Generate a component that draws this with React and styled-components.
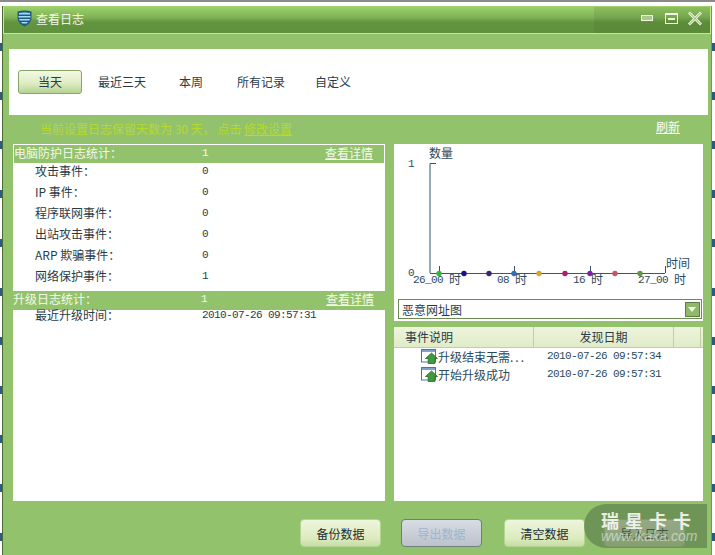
import React from 'react';
import styled, { createGlobalStyle } from 'styled-components';

const CJK = '"Noto Sans CJK SC", "Liberation Sans", sans-serif';
const MONO = '"Liberation Mono", "Noto Sans CJK SC", monospace';

const tabs = [
  ['当天', 16],
  ['最近三天', 33],
  ['本周', 34],
  ['所有记录', 30],
  ['自定义', 0]
];
const protectRows = [
  ['攻击事件：', '0'],
  ['IP 事件：', '0'],
  ['程序联网事件：', '0'],
  ['出站攻击事件：', '0'],
  ['ARP 欺骗事件：', '0'],
  ['网络保护事件：', '1']
];
const events = [
  ['升级结束无需', '...', '2010-07-26 09:57:34'],
  ['开始升级成功', '', '2010-07-26 09:57:31']
];
const dots = [
  [439, '#2fb83a'], [464, '#1c0f8c'], [489, '#3c2272'], [514, '#2f70b8'], [539, '#d8a52c'],
  [565, '#b01c70'], [590, '#8420a8'], [615, '#c05a62'], [640, '#5f9a3c']
];

function ShieldIcon() {
  return (
    <svg width="15" height="17" viewBox="0 0 15 17">
      <path d="M0.500 1.500 Q7.500 -0.500 14.500 1.500 V8 Q14.500 13 7.500 16.500 Q0.500 13 0.500 8 Z" fill="#1f5a86" />
      <path d="M2 3 Q7.500 1.800 13 3 V4.500 H2 Z M1.500 6 H13.500 V7.500 H1.500 Z M2 9 H13 L12.400 10.500 H2.600 Z M4 12 H11 L9.500 13.500 H5.500 Z" fill="#a6dcf0" />
    </svg>
  );
}

function UpgradeIcon() {
  return (
    <svg width="17" height="15" viewBox="0 0 17 15">
      <rect x="0.5" y="0.5" width="14" height="12.5" fill="#fff" stroke="#4a74a8" />
      <rect x="1" y="1" width="13" height="2" fill="#7fa4cc" />
      <path d="M10.5 4 L16.5 9.5 H13.8 V14.5 H7.2 V9.5 H4.5 Z" fill="#3f9a3a" stroke="#1f6a22" strokeWidth="0.8" />
    </svg>
  );
}

function Chart() {
  return (
    <ChartSvg width="309" height="152" viewBox="394 144 309 152">
      <path d="M436 163.500 H430 V273" fill="none" stroke="#2c5570" />
      <path d="M439.500 266 V273 M514.500 266 V273 M590.500 266 V273 M665.500 266 V273" stroke="#2c5570" />
      <path d="M430 273.500 H665" stroke="#a52a3a" />
      {dots.map(([x, c]) => (
        <circle key={x} cx={x} cy="273.500" r="2.700" fill={c} />
      ))}
      <ChartText x="429" y="158">数量</ChartText>
      <ChartText x="408" y="167" $mono>1</ChartText>
      <ChartText x="408" y="276" $mono>0</ChartText>
      <ChartText x="666" y="268">时间</ChartText>
      <ChartText x="413" y="283" $mono>26_00</ChartText>
      <ChartText x="449" y="284">时</ChartText>
      <ChartText x="497" y="283" $mono>08</ChartText>
      <ChartText x="515" y="284">时</ChartText>
      <ChartText x="573" y="283" $mono>16</ChartText>
      <ChartText x="591" y="284">时</ChartText>
      <ChartText x="638" y="283" $mono>27_00</ChartText>
      <ChartText x="674" y="284">时</ChartText>
    </ChartSvg>
  );
}

export default function App() {
  return (
    <>
      <GlobalStyle />
      <Desktop>
        <Window>
          <TitleBar>
            <ShieldIcon />
            <Title>查看日志</Title>
            <WindowButtons>
              <MinButton />
              <MaxButton />
              <CloseButton>
                <svg width="16" height="15" viewBox="0 0 16 15">
                  <path d="M2 1.500 L14 13.500 M14 1.500 L2 13.500" stroke="#e8f2d8" strokeWidth="3" fill="none" />
                  <path d="M2.500 2 L13.500 13 M13.500 2 L2.500 13" stroke="#86ad66" strokeWidth="0.900" fill="none" />
                </svg>
              </CloseButton>
            </WindowButtons>
          </TitleBar>
          <Body>
            <TabPanel>
              {tabs.map(([t, gap], i) => (
                <Tab key={t} $active={i === 0} $gap={gap}>{t}</Tab>
              ))}
            </TabPanel>
            <NoticeRow>
              <Notice>当前设置日志保留天数为 30 天， 点击 <NoticeLink>修改设置</NoticeLink></Notice>
              <Refresh>刷新</Refresh>
            </NoticeRow>
            <Columns>
              <StatsPanel>
                <SectionHead>
                  <HeadLabel>电脑防护日志统计：</HeadLabel>
                  <HeadValue>1</HeadValue>
                  <DetailLink>查看详情</DetailLink>
                </SectionHead>
                <StatList>
                  {protectRows.map(([label, value]) => (
                    <StatRow key={label}>
                      <StatLabel>{label}</StatLabel>
                      <StatValue>{value}</StatValue>
                    </StatRow>
                  ))}
                </StatList>
                <SectionHead $second>
                  <HeadLabel>升级日志统计：</HeadLabel>
                  <HeadValue>1</HeadValue>
                  <DetailLink>查看详情</DetailLink>
                </SectionHead>
                <LastRow>
                  <StatLabel>最近升级时间：</StatLabel>
                  <StatValue>2010-07-26 09:57:31</StatValue>
                </LastRow>
              </StatsPanel>
              <RightColumn>
                <ChartPanel>
                  <Chart />
                  <SelectBox>
                    <span>恶意网址图</span>
                    <SelectArrow />
                  </SelectBox>
                </ChartPanel>
                <EventPanel>
                  <EventHead>
                    <HeadCell $w={140}>事件说明</HeadCell>
                    <HeadCell $w={140} $center>发现日期</HeadCell>
                    <HeadCell $w={27} />
                  </EventHead>
                  {events.map(([name, more, date]) => (
                    <EventRow key={date}>
                      <UpgradeIcon />
                      <EventName>{name}<Ellipsis>{more}</Ellipsis></EventName>
                      <EventDate>{date}</EventDate>
                    </EventRow>
                  ))}
                </EventPanel>
              </RightColumn>
            </Columns>
            <Footer>
              <FootButton>备份数据</FootButton>
              <FootButton $disabled>导出数据</FootButton>
              <FootButton>清空数据</FootButton>
              <FootButton>导入日志</FootButton>
            </Footer>
          </Body>
          <Watermark>
            <MarkTitle>瑞星卡卡</MarkTitle>
            <MarkUrl>www.ikaka.com</MarkUrl>
          </Watermark>
        </Window>
      </Desktop>
    </>
  );
}

const GlobalStyle = createGlobalStyle`
  html, body { margin: 0; padding: 0; background: #fff; }
  body { font-family: ${CJK}; font-size: 12px; }
`;

const Desktop = styled.div`
  width: 715px;
  height: 555px;
  overflow: hidden;
  padding: 6px 3px 0 2px;
  box-sizing: border-box;
  border-top: 2px solid #8a8a8a;
  background: repeating-linear-gradient(180deg, #fff 0 41px, #2a5a88 41px 51px, #fff 51px 49px);
  background-size: 100% 49px;
`;

const Window = styled.div`
  position: relative;
  height: 560px;
  margin-top: -2px;
  background: #92c36c;
  border-left: 1px solid #4c6a38;
  border-right: 1px solid #6f9a52;
`;

const TitleBar = styled.div`
  height: 28px;
  box-sizing: border-box;
  display: flex;
  align-items: center;
  padding: 0 0 4px 13px;
  border: 1px solid #c6e890;
  border-top-color: #9ed070;
  background:
    linear-gradient(90deg, transparent 590px, rgba(60, 90, 30, 0.14) 590px),
    linear-gradient(180deg, #9bd068 0, #7fb257 40%, #63943f 58%, #5f923d 100%);
`;

const Title = styled.span`
  margin-left: 4px;
  color: #f2f6ea;
  font-size: 12px;
`;

const WindowButtons = styled.div`
  margin-left: auto;
  display: flex;
  align-items: center;
  padding-right: 7px;
`;

const MinButton = styled.div`
  width: 10px;
  height: 4px;
  margin-right: 12px;
  border: 1px solid #f0f6e4;
  background: #a9c98a;
`;

const MaxButton = styled.div`
  width: 11px;
  height: 8px;
  margin-right: 9px;
  border: 1px solid #f0f6e4;
  border-top-width: 2px;
  position: relative;
  &::after {
    content: '';
    position: absolute;
    left: 2px;
    right: 2px;
    top: 3px;
    height: 2px;
    background: #f0f6e4;
  }
`;

const CloseButton = styled.div`
  display: flex;
`;

const Body = styled.div`
  padding: 15px 3px 0 6px;
`;

const TabPanel = styled.div`
  height: 66px;
  background: #fff;
  display: flex;
  align-items: center;
  padding-left: 9px;
`;

const Tab = styled.div`
  width: ${(p) => (p.$active ? '62px' : 'auto')};
  height: 22px;
  margin-right: ${(p) => p.$gap}px;
  line-height: 22px;
  text-align: center;
  color: #2a3b46;
  border-radius: 3px;
  border: ${(p) => (p.$active ? '1px solid #86a768' : 'none')};
  background: ${(p) => (p.$active ? 'linear-gradient(180deg, #f4f8e4 0, #dfecc4 55%, #b4d394 100%)' : 'transparent')};
`;

const NoticeRow = styled.div`
  height: 29px;
  box-sizing: border-box;
  display: flex;
  align-items: center;
  padding: 0 28px 2px 31px;
`;

const Notice = styled.span`
  color: #b7d92c;
`;

const NoticeLink = styled.span`
  text-decoration: underline;
`;

const Refresh = styled.span`
  margin-left: auto;
  margin-bottom: 4px;
  color: #fff;
  text-decoration: underline;
`;

const Columns = styled.div`
  display: flex;
  gap: 9px;
  padding-left: 4px;
`;

const StatsPanel = styled.div`
  width: 372px;
  height: 357px;
  box-sizing: border-box;
  background: #fff;
`;

const SectionHead = styled.div`
  height: 19px;
  box-sizing: border-box;
  padding-bottom: 3px;
  border: 1px solid #fff;
  border-width: ${(p) => (p.$second ? '0' : '1px 1px 0 1px')};
  background: #92c36c;
  display: flex;
  align-items: center;
  color: #f4f8ea;
  line-height: 16px;
`;

const HeadLabel = styled.span`
  width: 188px;
  flex: none;
`;

const HeadValue = styled.span`
  font-family: ${MONO};
  font-size: 11px;
`;

const DetailLink = styled.span`
  margin-left: auto;
  margin-right: 11px;
  text-decoration: underline;
`;

const StatList = styled.div`
  display: flex;
  flex-direction: column;
  padding-bottom: 2px;
`;

const StatRow = styled.div`
  height: 21px;
  display: flex;
  align-items: flex-start;
  line-height: 16px;
  padding-left: 22px;
  color: #2a3b46;
`;

const LastRow = styled(StatRow)`
  height: 9px;
  align-items: center;
`;

const StatLabel = styled.span`
  width: 167px;
  flex: none;
`;

const StatValue = styled.span`
  font-family: ${MONO};
  font-size: 11px;
  letter-spacing: -0.6px;
`;

const RightColumn = styled.div`
  width: 309px;
  display: flex;
  flex-direction: column;
  gap: 6px;
`;

const ChartPanel = styled.div`
  height: 177px;
  background: #fff;
`;

const ChartSvg = styled.svg`
  display: block;
`;

const ChartText = styled.text`
  font-family: ${(p) => (p.$mono ? MONO : CJK)};
  font-size: ${(p) => (p.$mono ? '11px' : '12px')};
  letter-spacing: ${(p) => (p.$mono ? '-0.6px' : '0')};
  fill: #2c4a5c;
`;

const SelectBox = styled.div`
  height: 18px;
  margin: 3px 1px 0 4px;
  border: 1px solid #6d8a50;
  display: flex;
  align-items: center;
  justify-content: space-between;
  padding-left: 3px;
  color: #2a3b46;
`;

const SelectArrow = styled.div`
  width: 13px;
  height: 13px;
  margin-right: 1px;
  border: 1px solid #5e7d44;
  background: #8fb868;
  position: relative;
  &::after {
    content: '';
    position: absolute;
    left: 2px;
    top: 4px;
    border: 4.500px solid transparent;
    border-top: 5px solid #f4f8ea;
    border-bottom: 0;
  }
`;

const EventPanel = styled.div`
  flex: 0 0 174px;
  background: #fff;
`;

const EventHead = styled.div`
  height: 20px;
  display: flex;
  background: linear-gradient(180deg, #eef4dc, #e0ecc8);
  border-bottom: 1px solid #bcd29a;
`;

const HeadCell = styled.div`
  width: ${(p) => p.$w}px;
  box-sizing: border-box;
  line-height: 19px;
  padding-left: ${(p) => (p.$center ? '0' : '11px')};
  text-align: ${(p) => (p.$center ? 'center' : 'left')};
  color: #2a3b46;
  border-right: 1px solid #bcd29a;
`;

const EventRow = styled.div`
  height: 18px;
  box-sizing: border-box;
  padding: 0 0 2px 27px;
  display: flex;
  align-items: center;
  color: #2a4a5c;
`;

const EventName = styled.span`
  width: 109px;
  flex: none;
`;

const Ellipsis = styled.span`
  letter-spacing: 2px;
`;

const EventDate = styled(StatValue)``;

const Footer = styled.div`
  display: flex;
  gap: 20px;
  padding: 18px 0 0 291px;
`;

const FootButton = styled.div`
  width: 81px;
  height: 28px;
  box-sizing: border-box;
  line-height: 27px;
  text-align: center;
  border-radius: 4px;
  color: ${(p) => (p.$disabled ? '#9db6cc' : '#1f2c34')};
  border: 1px solid ${(p) => (p.$disabled ? '#6f7f78' : '#b4d494')};
  background: ${(p) => (p.$disabled
    ? 'linear-gradient(180deg, #d8dce4, #bcc2cc)'
    : 'linear-gradient(180deg, #eef5dc, #dcebc0 70%, #c6dea4)')};
  &:nth-child(3) {
    margin-left: 2px;
    margin-right: -1px;
  }
`;

const Watermark = styled.div`
  position: absolute;
  left: 581px;
  top: 498px;
  width: 123px;
  height: 44px;
  box-sizing: border-box;
  padding-left: 17px;
  border-radius: 22px 0 0 22px;
  background: rgba(88, 117, 75, 0.6);
  color: #fff;
`;

const MarkTitle = styled.div`
  font-size: 18px;
  font-weight: 700;
  line-height: 18px;
  margin-top: 7px;
  letter-spacing: 6px;
  white-space: nowrap;
  color: rgba(255, 255, 255, 0.85);
`;

const MarkUrl = styled.div`
  font-family: "Liberation Sans", sans-serif;
  font-style: italic;
  font-size: 14px;
  line-height: 15px;
  white-space: nowrap;
  color: rgba(255, 255, 255, 0.5);
`;
